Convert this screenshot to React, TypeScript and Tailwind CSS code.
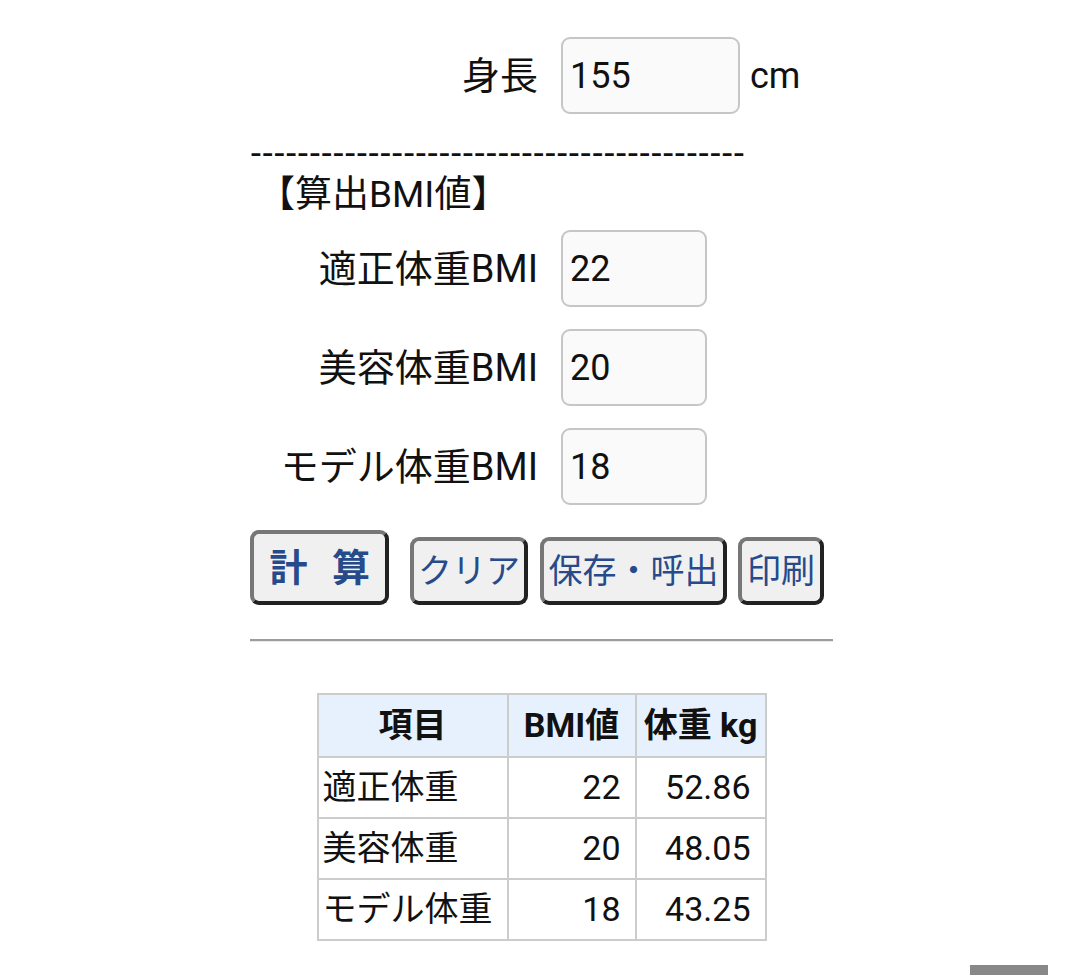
const font = { fontFamily: 'Roboto, "Noto Sans CJK JP", sans-serif' };

function Field({ label, value, width }: { label: string; value: string; width: string }) {
  return (
    <div className="flex items-center">
      <div className="w-[288px] shrink-0 whitespace-nowrap text-right text-[38px] leading-none text-[#111]">{label}</div>
      <input
        readOnly
        value={value}
        className={`ml-[23px] h-[77px] ${width} rounded-[9px] border-2 border-[#c6c6c6] bg-[#fafafa] px-[7px] text-[36px] text-[#111] outline-none`}
      />
    </div>
  );
}

const rows = [
  { name: "適正体重", bmi: "22", kg: "52.86" },
  { name: "美容体重", bmi: "20", kg: "48.05" },
  { name: "モデル体重", bmi: "18", kg: "43.25" },
];

const btn =
  "h-[68px] rounded-[9px] border-4 border-t-[#777] border-l-[#777] border-b-[#222] border-r-[#222] bg-[#f0f0f0] text-[34px] leading-none text-[#274a8a]";

export default function App() {
  return (
    <div className="relative min-h-[975px] overflow-hidden bg-white" style={font}>
      <div className="ml-[250px] w-[583px] pt-[37px]">
        <div className="flex items-center">
          <Field label="身長" value="155" width="w-[179px]" />
          <span className="ml-[10px] text-[36px] leading-none text-[#111]">cm</span>
        </div>

        <div
          className="mt-[15px] h-[42px] whitespace-nowrap text-[33px] font-medium leading-[42px] text-[#111]"
          style={{ fontFamily: '"Noto Sans CJK JP", sans-serif' }}
        >
          {"-".repeat(42)}
        </div>
        <div className="mt-[3px] pl-[8px] text-[37px] leading-[42px] text-[#111]">【算出BMI値】</div>

        <div className="mt-[14px] flex flex-col gap-[22px]">
          <Field label="適正体重BMI" value="22" width="w-[146px]" />
          <Field label="美容体重BMI" value="20" width="w-[146px]" />
          <Field label="モデル体重BMI" value="18" width="w-[146px]" />
        </div>

        <div className="mt-[25px] flex items-end">
          <button className="h-[75px] w-[139px] rounded-[9px] border-4 border-t-[#777] border-l-[#777] border-b-[#222] border-r-[#222] bg-[#f0f0f0] pl-[8px] text-[38px] font-bold leading-none tracking-[0.2em] text-[#274a8a]">
            計 算
          </button>
          <button className={`ml-[21px] w-[118px] ${btn}`}>クリア</button>
          <button className={`ml-[12px] w-[187px] ${btn}`}>保存・呼出</button>
          <button className={`ml-[11px] w-[86px] ${btn}`}>印刷</button>
        </div>

        <div className="mt-[34px] border-t-2 border-b border-t-[#9c9c9c] border-b-[#e8e8e8]" />

        <div className="mt-[51px] flex justify-center">
          <table className="border-collapse text-[34px] text-[#111]">
            <thead>
              <tr className="h-[63px] bg-[#e6f1fd]">
                <th className="w-[190px] border-2 border-[#cccccc] font-bold">項目</th>
                <th className="w-[128px] border-2 border-[#cccccc] font-bold">BMI値</th>
                <th className="w-[130px] border-2 border-[#cccccc] font-bold">体重 kg</th>
              </tr>
            </thead>
            <tbody>
              {rows.map((r) => (
                <tr key={r.name} className="h-[61px]">
                  <td className="whitespace-nowrap border-2 border-[#cccccc] pl-[4px] text-left font-normal">{r.name}</td>
                  <td className="border-2 border-[#cccccc] pr-[14px] text-right">{r.bmi}</td>
                  <td className="border-2 border-[#cccccc] pr-[14px] text-right">{r.kg}</td>
                </tr>
              ))}
            </tbody>
          </table>
        </div>
      </div>

      <div className="absolute bottom-0 left-[970px] h-[10px] w-[78px] bg-[#888]" />
    </div>
  );
}
